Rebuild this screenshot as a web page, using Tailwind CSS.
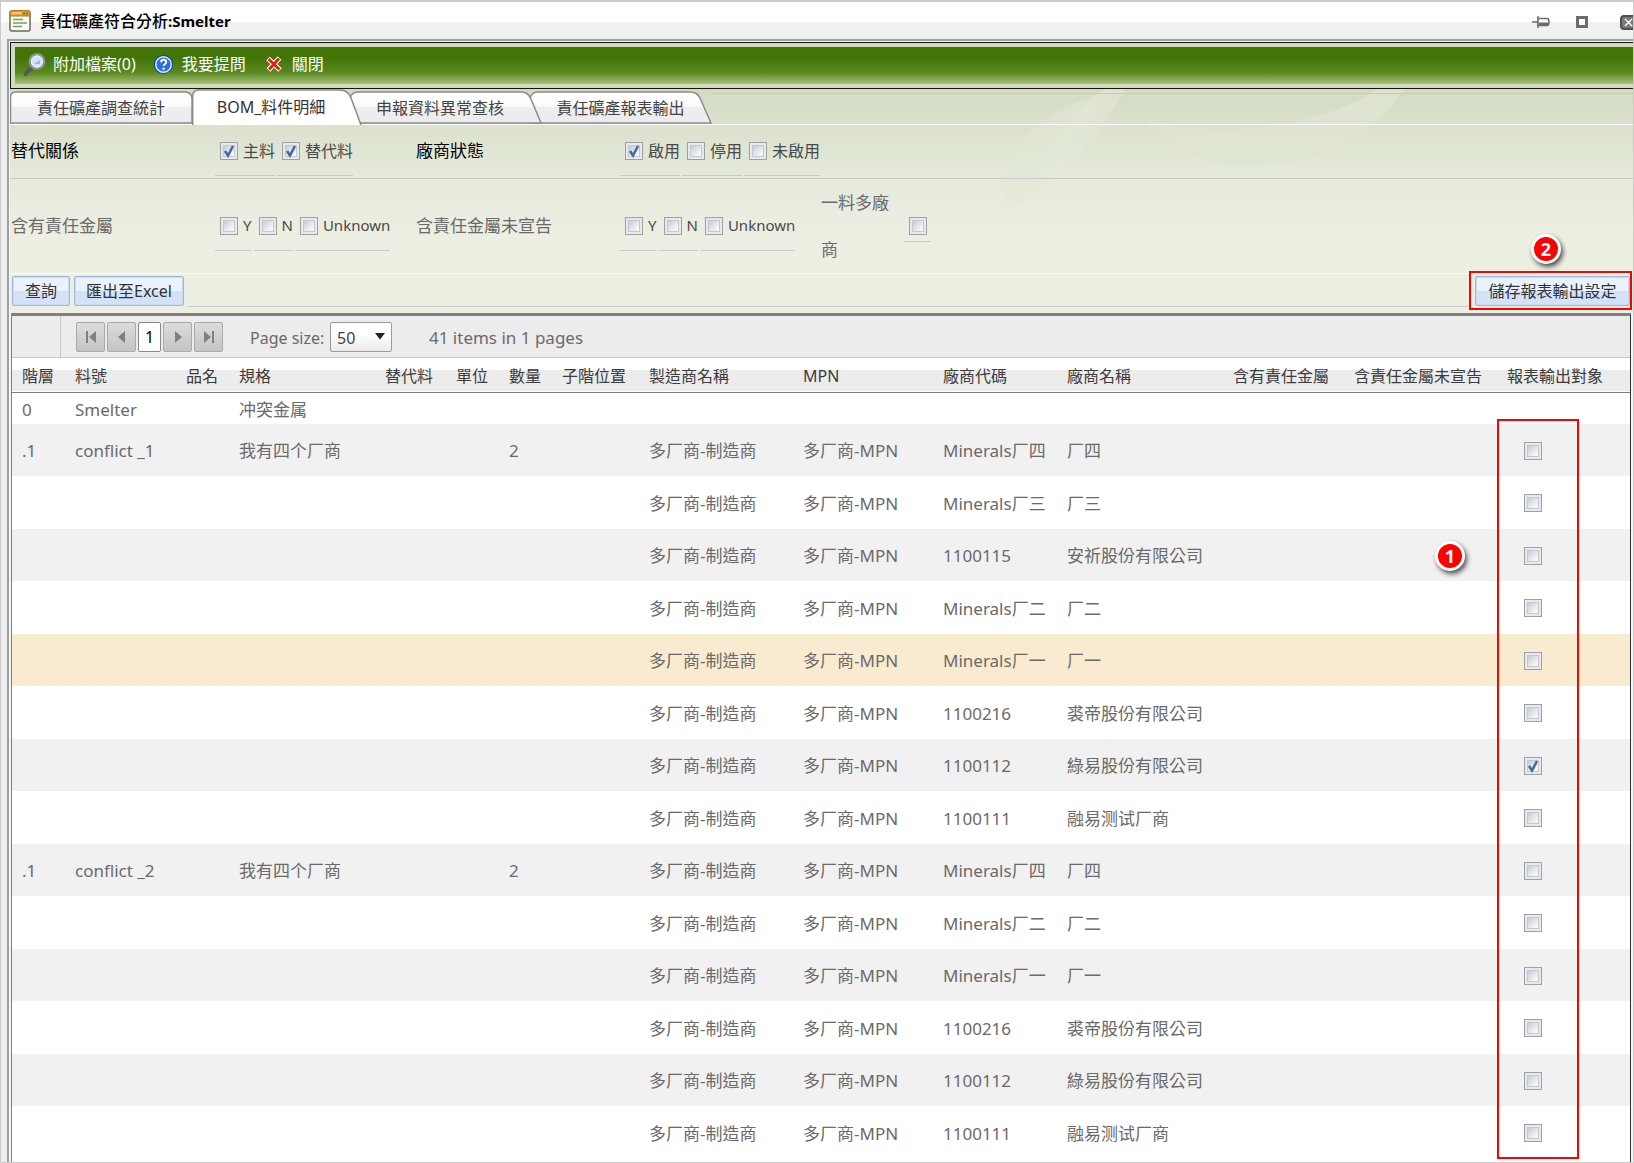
<!DOCTYPE html>
<html lang="zh-Hant">
<head>
<meta charset="utf-8">
<title>責任礦產符合分析:Smelter</title>
<script src="https://cdn.jsdelivr.net/npm/@tailwindcss/browser@4"></script>
</head>
<body class="bg-[#eeeeee] font-['Noto_Sans','Noto_Sans_CJK_TC',sans-serif] text-[17px] text-[#6a6a6a]">
<div class="flex min-h-screen flex-col overflow-hidden border border-t-2 border-[#cbcbcb]">

  <!-- Title bar -->
  <header class="flex h-[37px] items-center bg-linear-to-b from-white from-55% to-[#f1f1f1] to-55% pl-2">
    <svg class="size-[22px]" viewBox="0 0 22 22" aria-hidden="true">
      <rect x="1" y="1" width="20" height="20" rx="2" fill="#fdfdf8" stroke="#6a6a55" stroke-width="1.5"/>
      <path d="M1 6V2.500Q1 .8 3 .8H19Q21 .8 21 2.500V6Z" fill="#e9a233" stroke="#b9761c"/>
      <path d="M3 3H12" stroke="#f8d58e" stroke-width="1.500"/>
      <path d="M14 3.500h2M17 3.500h2" stroke="#5c7d2e" stroke-width="2"/>
      <path d="M4 9.500H14M4 13H18M4 16.500H13" stroke="#69a45d" stroke-width="1.700"/>
    </svg>
    <h1 class="ml-[9px] text-[15px] font-bold text-black"><span class="text-base font-medium">責任礦產符合分析</span>:Smelter</h1>
    <div class="ml-auto flex items-center pt-[3px]">
      <button aria-label="釘選" class="mr-[26px]">
        <svg class="h-3 w-[18px]" viewBox="0 0 18 12"><path d="M0 6h6M6 0v12" stroke="#6b6b6b" stroke-width="1.500"/><path d="M6 2.500h9q2 0 2 3.500t-2 3.500H6Z" fill="#fff" stroke="#6b6b6b" stroke-width="1.500"/><path d="M7 6.500h10v2l-2 1.500H7Z" fill="#6b6b6b"/></svg>
      </button>
      <button aria-label="最大化" class="mr-8 size-3 border-[3px] border-[#6b6b6b] bg-white"></button>
      <button aria-label="關閉視窗" class="-mr-1 flex h-[15px] w-[17px] items-center justify-center rounded-sm border-2 border-[#4f4f4f] bg-[#7a7a7a]">
        <svg class="size-[9px]" viewBox="0 0 9 9"><path d="M1 1l7 7M8 1l-7 7" stroke="#fff" stroke-width="1.300"/></svg>
      </button>
    </div>
  </header>

  <div class="ml-[6px] flex grow flex-col border-t-2 border-l-2 border-[#9ba0a3] bg-[#f3f7fa] pt-px pl-px">

    <!-- Toolbar -->
    <nav class="border-y border-l border-[#10190a] bg-[#d3dabf] py-1 pl-1">
      <div class="flex h-[37px] items-center bg-linear-to-b from-[#427506] from-30% via-[#5a8a1f] via-70% to-[#a9bf76] pb-[3px] pl-2 text-base text-white">
        <button class="flex items-center gap-[7px]">
          <svg class="size-[23px]" viewBox="0 0 23 23" aria-hidden="true"><path d="M9.500 13.500L2.500 21" stroke="#55575c" stroke-width="4" stroke-linecap="round"/><circle cx="14" cy="8.500" r="7.300" fill="#b9d3f0" stroke="#8e9299" stroke-width="2.200"/><circle cx="14" cy="8.500" r="5.500" fill="#cfe2f6" stroke="#f4f8fc"/><path d="M11 11l6-4v4Z" fill="#8fb9ea"/></svg>
          附加檔案(0)
        </button>
        <button class="ml-[17px] flex items-center gap-2">
          <svg class="size-[21px]" viewBox="0 0 21 21" aria-hidden="true"><circle cx="10.500" cy="10.500" r="9.700" fill="#16489f"/><circle cx="10.500" cy="10.500" r="7.800" fill="#2f6fdb" stroke="#dfeafc" stroke-width="1.500"/><path d="M8 8.300q.2-2.600 2.700-2.600t2.500 2.300q0 1.300-1.500 2.200-1 .6-1 1.900" fill="none" stroke="#fff" stroke-width="1.900"/><circle cx="10.600" cy="14.800" r="1.200" fill="#fff"/></svg>
          我要提問
        </button>
        <button class="ml-5 flex items-center gap-[10px]">
          <svg class="size-4" viewBox="0 0 16 16" aria-hidden="true"><path d="M2 2.500L14 14M13.500 2L2.500 14" stroke="#fff" stroke-width="5"/><path d="M2.500 3L13.500 13.500M13 2.500L3 13.500" stroke="#e0220b" stroke-width="2.800"/></svg>
          關閉
        </button>
      </div>
    </nav>

    <!-- Tabs and filters share one tinted backdrop -->
    <section class="relative isolate bg-linear-to-b from-[#d4dbc3] via-[#e5eadb] via-40% to-[#eeefe3] to-70%">
      <svg class="absolute top-0 right-0 -z-10 h-[225px] w-[800px]" viewBox="0 0 800 225" aria-hidden="true">
        <path d="M272 0H292Q262 60 196 108Q190 60 272 0Z" fill="#e4e9da" opacity=".5"/>
        <path d="M545 0H572Q520 75 410 78Q360 76 312 30Q370 46 430 38Q500 30 545 0Z" fill="#dfe5d2" opacity=".8"/>
        <path d="M200 40Q240 10 280 0Q250 30 180 120Q150 90 200 40Z" fill="#e2e8d5" opacity=".5"/>
      </svg>

      <div class="border-b border-white" role="tablist">
        <div class="flex h-[35px] items-end text-base text-[#444444]">
          <button role="tab" class="relative h-[33px] w-[182px]">
            <svg class="absolute inset-0" width="182" height="33" viewBox="0 0 182 33"><defs><linearGradient id="t" x2="0" y2="1"><stop offset="0" stop-color="#fff"/><stop offset=".45" stop-color="#fbfbfb"/><stop offset=".5" stop-color="#eeeeee"/><stop offset="1" stop-color="#ececec"/></linearGradient></defs><path d="M.5 32V6Q.5 1 6 1H176Q182 2 182 8V32Z" fill="url(#t)" stroke="#8a8a8a" stroke-width="1.500"/></svg>
            <span class="relative">責任礦產調查統計</span>
          </button>
          <button role="tab" aria-selected="true" class="relative z-20 h-[35px] w-[170px] text-[#333333]">
            <svg class="absolute inset-0" width="170" height="36" viewBox="0 0 170 36"><path d="M.7 36V7Q.7 1 7 1H148Q156 1 159 9L169 36" fill="#fff" stroke="#8a8a8a" stroke-width="1.500"/></svg>
            <span class="relative pr-3">BOM_料件明細</span>
          </button>
          <button role="tab" class="relative z-10 -ml-3 h-[33px] w-[192px]">
            <svg class="absolute inset-0" width="192" height="33" viewBox="0 0 192 33"><path d="M0 32V7Q2 1 8 1H172Q178 1 181 8L191 32Z" fill="url(#t)" stroke="#8a8a8a" stroke-width="1.500"/></svg>
            <span class="relative pr-3">申報資料異常查核</span>
          </button>
          <button role="tab" class="relative -ml-3 h-[33px] w-[181px]">
            <svg class="absolute inset-0" width="182" height="33" viewBox="0 0 182 33"><path d="M0 32V7Q2 1 8 1H160Q167 1 170 7L181 32Z" fill="url(#t)" stroke="#8a8a8a" stroke-width="1.500"/></svg>
            <span class="relative">責任礦產報表輸出</span>
          </button>
          <div class="h-[31px] grow border-t border-[#c8cbc4]"></div>
        </div>
      </div>

      <form id="filters">
        <div class="grid h-[54px] grid-cols-[204px_201px_204px_1fr] items-center border-b border-[#c8cbc9] pb-[2px] pl-px text-black">
          <div>替代關係</div><div class="flex gap-[2px] self-end" data-checks="主料*,替代料*"></div>
          <div>廠商狀態</div><div class="flex gap-[2px] self-end" data-checks="啟用*,停用,未啟用"></div>
        </div>
        <div class="grid h-[95px] grid-cols-[204px_201px_204px_201px_83px_1fr] items-center border-b border-white pb-[5px] pl-px">
          <div>含有責任金屬</div><div class="flex gap-[2px]" data-checks="Y,N,Unknown"></div>
          <div>含責任金屬未宣告</div><div class="flex gap-[2px]" data-checks="Y,N,Unknown"></div>
          <label for="multi" class="w-[76px] leading-[47px]">一料多廠商</label>
          <div class="flex h-8 w-[27px] items-start border-b border-[#c8cbc9] pt-[7px] pl-[5px]" id="multiBox"></div>
        </div>
        <div class="flex h-[39px] gap-[4px] pt-[2px] pl-[2px] text-base text-[#333333]">
          <button type="button" class="h-[30px] w-[58px] rounded-xs border border-[#9db7d8] bg-linear-to-b from-[#eaf2fd] from-50% to-[#d3e2f6] to-50% shadow-[inset_0_0_0_1px_#c9dcf5]">查詢</button>
          <button type="button" class="h-[30px] w-[110px] rounded-xs border border-[#9db7d8] bg-linear-to-b from-[#eaf2fd] from-50% to-[#d3e2f6] to-50% shadow-[inset_0_0_0_1px_#c9dcf5]">匯出至Excel</button>
          <div class="h-[31px] grow border-b border-[#c8cbc9]"></div>
          <div class="relative mr-[3px]">
            <button type="button" class="h-[30px] w-[155px] rounded-xs border border-[#9db7d8] bg-linear-to-b from-[#eaf2fd] from-50% to-[#d3e2f6] to-50% shadow-[inset_0_0_0_1px_#c9dcf5]">儲存報表輸出設定</button>
            <div class="pointer-events-none absolute -top-[5px] -right-[2px] -left-1.5 h-[39px] border-2 border-[#ff0000]"></div>
            <div class="absolute -top-[42px] left-14 flex size-[30px] items-center justify-center rounded-full border-[3px] border-white bg-[#ff0000] text-lg font-bold text-white shadow-[2px_3px_5px_#000000aa]">2</div>
          </div>
        </div>
      </form>
    </section>

    <!-- Result grid -->
    <section class="relative mr-[2px] ml-px grow border-x border-t-3 border-l-[#808080] border-r-[#303030] border-t-[#808080] bg-white">
      <div class="flex h-[42px] items-center border-b border-[#c8c8c8] bg-[#ececec] pl-[48px]">
        <div class="mr-[15px] h-full border-l border-[#c8c8c8]"></div>
        <div class="flex gap-[2px]">
          <button aria-label="第一頁" class="flex h-[30px] w-[29px] items-center justify-center rounded-xs border border-[#aaaaaa] bg-linear-to-b from-[#dcdcdc] to-[#c4c4c4]"><svg class="size-3" viewBox="0 0 12 12" fill="#808080"><path d="M1 0h2v12H1zM11 0v12L4 6z"/></svg></button>
          <button aria-label="上一頁" class="flex h-[30px] w-[29px] items-center justify-center rounded-xs border border-[#aaaaaa] bg-linear-to-b from-[#dcdcdc] to-[#c4c4c4]"><svg class="size-3" viewBox="0 0 12 12" fill="#808080"><path d="M9 0v12L2 6z"/></svg></button>
          <button class="h-[30px] w-[23px] rounded-xs border border-[#888888] bg-white text-base text-black">1</button>
          <button aria-label="下一頁" class="flex h-[30px] w-[29px] items-center justify-center rounded-xs border border-[#aaaaaa] bg-linear-to-b from-[#dcdcdc] to-[#c4c4c4]"><svg class="size-3" viewBox="0 0 12 12" fill="#808080"><path d="M3 0v12l7-6z"/></svg></button>
          <button aria-label="最後頁" class="flex h-[30px] w-[29px] items-center justify-center rounded-xs border border-[#aaaaaa] bg-linear-to-b from-[#dcdcdc] to-[#c4c4c4]"><svg class="size-3" viewBox="0 0 12 12" fill="#808080"><path d="M9 0h2v12H9zM1 0v12l7-6z"/></svg></button>
        </div>
        <label for="size" class="ml-[27px] w-20 pt-[2px] text-base whitespace-nowrap">Page size:</label>
        <div class="relative">
          <select id="size" class="h-[30px] w-[62px] appearance-none rounded-xs border border-[#9a9a9a] bg-linear-to-b from-white from-40% to-[#ebebeb] pt-[2px] pl-1.5 text-base text-[#444444]"><option>50</option></select>
          <svg class="pointer-events-none absolute top-[11px] right-[7px] h-[7px] w-2.5" viewBox="0 0 10 7"><path d="M0 0h10L5 6.500z" fill="#222"/></svg>
        </div>
        <div class="ml-[37px] pt-[2px]">41 items in 1 pages</div>
      </div>

      <table class="w-full table-fixed border-collapse text-left">
        <colgroup><col class="w-[53px]"><col class="w-[111px]"><col class="w-[53px]"><col class="w-[146px]"><col class="w-[71px]"><col class="w-[53px]"><col class="w-[53px]"><col class="w-[87px]"><col class="w-[154px]"><col class="w-[140px]"><col class="w-[124px]"><col class="w-[166px]"><col class="w-[121px]"><col class="w-[153px]"><col class="w-[133px]"></colgroup>
        <thead><tr id="head" class="h-[34px] border-b border-[#7d7d7d] bg-linear-to-b from-white from-35% to-[#ececec] to-35% text-base whitespace-nowrap text-[#3c3c3c]"></tr></thead>
        <tbody id="rows"></tbody>
      </table>

      <!-- Callouts over the grid -->
      <div class="pointer-events-none absolute top-[103px] right-[51px] h-[740px] w-[82px] border-2 border-[#ff0000]"></div>
      <div class="absolute top-[225px] right-[165px] flex size-[30px] items-center justify-center rounded-full border-[3px] border-white bg-[#ff0000] text-lg font-bold text-white shadow-[2px_3px_5px_#000000aa]">1</div>
    </section>
  </div>
</div>

<script>
const box = (id, on, label) => `
  <span class="relative block size-[18px] shrink-0">
    <input type="checkbox" id="${id}" ${on ? 'checked' : ''} ${label ? `aria-label="${label}"` : ''} class="peer block size-[18px] appearance-none border border-[#a0a0a4] bg-linear-to-br from-[#b4bfcf] to-[#f6f6f6] to-70% shadow-[inset_0_0_0_2px_#e9e9ec,inset_0_0_0_3px_#c3c8d2]">
    <svg class="pointer-events-none absolute inset-0 hidden peer-checked:block" viewBox="0 0 18 18"><path d="M5 9l3 4.500L13 4" fill="none" stroke="#42699e" stroke-width="2.500"/></svg>
  </span>`;

document.querySelectorAll('[data-checks]').forEach((group, g) => {
  group.innerHTML = group.dataset.checks.split(',').map((item, i) => {
    const name = item.replace('*', ''), id = `f${g}_${i}`;
    const size = /^[A-Z]/.test(name) ? 'text-[15px]' : 'text-base';
    return `<div class="flex h-[49px] items-center border-b border-[#c8cbc9] pl-[5px]">${box(id, item.endsWith('*'))}<label for="${id}" class="pl-[5px] ${size} text-[#4a4a4a]">${name}</label></div>`;
  }).join('');
});
document.getElementById('multiBox').innerHTML = box('multi', false);

document.getElementById('head').innerHTML =
  ['階層','料號','品名','規格','替代料','單位','數量','子階位置','製造商名稱','MPN','廠商代碼','廠商名稱','含有責任金屬','含責任金屬未宣告','報表輸出對象']
  .map(t => `<th class="pt-[2px] pl-[10px] font-normal">${t}</th>`).join('');

const vendors1 = [['Minerals厂四','厂四'],['Minerals厂三','厂三'],['1100115','安祈股份有限公司'],['Minerals厂二','厂二'],['Minerals厂一','厂一'],['1100216','裘帝股份有限公司'],['1100112','綠易股份有限公司'],['1100111','融易测试厂商']];
const vendors2 = [['Minerals厂四','厂四'],['Minerals厂二','厂二'],['Minerals厂一','厂一'],['1100216','裘帝股份有限公司'],['1100112','綠易股份有限公司'],['1100111','融易测试厂商']];
const group = (part, list) => list.map((v, i) => [i ? '' : '.1', i ? '' : part, '', i ? '' : '我有四个厂商', '', '', i ? '' : '2', '', '多厂商-制造商', '多厂商-MPN', v[0], v[1], '', '']);
const data = [...group('conflict _1', vendors1), ...group('conflict _2', vendors2)];
const cells = r => r.map(t => `<td class="pt-[2px] pl-[10px] whitespace-nowrap">${t}</td>`).join('');

document.getElementById('rows').innerHTML =
  `<tr class="h-8 bg-white">${cells(['0','Smelter','','冲突金属','','','','','','','','','','',''])}</tr>` +
  data.map((r, i) => {
    const look = i === 4 ? 'h-[52px] bg-[#f9ebd0]' : i % 2 ? 'h-[53px] bg-white' : 'h-[52px] bg-[#f1f1f1]';
    return `<tr class="${look}">${cells(r)}<td class="pt-px pl-[27px]">${box('out' + i, i === 6, '報表輸出對象')}</td></tr>`;
  }).join('');
</script>
</body>
</html>
